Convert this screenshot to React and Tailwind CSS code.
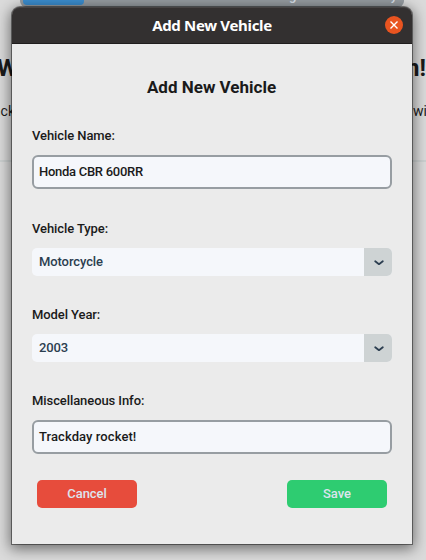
import React from "react";

function Backdrop() {
  return (
    <div className="h-[560px] w-[426px] overflow-hidden bg-[#dbdbdb] text-[#1a1a1a]">
      <div className="ml-5 flex h-[7px] w-[384px] items-end overflow-hidden rounded-b-md bg-[#979da2] pb-[2px] pl-[3px]">
        <div className="h-full w-[61px] rounded-b-sm bg-[#3b8ed0]" />
        <div className="ml-[205px] h-[5px] w-[108px] overflow-hidden">
          <div className="-mt-[12px] flex justify-between text-[13px] leading-4 font-medium text-[#dce4ee]">
            <span>g</span>
            <span>y</span>
          </div>
        </div>
      </div>
      <div className="mt-[45px] -ml-[3px] flex w-[429px] justify-between text-[24px] leading-8 font-bold whitespace-nowrap">
        <span>W</span>
        <span>n!</span>
      </div>
      <div className="mt-[17px] -ml-[7px] flex w-[434px] justify-between text-[14px] leading-5 whitespace-nowrap">
        <span>ack</span>
        <span>wi</span>
      </div>
      <div className="mt-[39px] h-[2px] bg-[#cdd1d1]" />
    </div>
  );
}

function Label({ children }) {
  return <label className="block h-5 text-[13px] leading-5 font-medium tracking-[-0.08px] text-[#1a1a1a]">{children}</label>;
}

function Entry({ children }) {
  return (
    <div className="flex h-[34px] items-center rounded-md border-2 border-[#979da2] bg-[#f5f7fb] pl-[5px] text-[13px] font-medium text-[#1a1a1a]">
      {children}
    </div>
  );
}

function Combo({ value }) {
  return (
    <div className="flex h-7 overflow-hidden rounded-[5px] bg-[#f5f7fb]">
      <span className="flex-1 pl-[7px] text-[13px] leading-[27px] font-medium tracking-[-0.1px] text-[#2c3e50]">{value}</span>
      <span className="flex w-7 items-center justify-center bg-[#ced3d4]">
        <svg width="10" height="6" viewBox="0 0 10 6" className="mt-px ml-px" fill="none" stroke="#2c3e50" strokeWidth="1.8" strokeLinecap="round" strokeLinejoin="round">
          <path d="M1.2 1.3 5 4.2 8.8 1.3" />
        </svg>
      </span>
    </div>
  );
}

export default function App() {
  return (
    <div className="relative h-[560px] w-[426px] overflow-hidden font-['Roboto',sans-serif]">
      <Backdrop />
      <div className="absolute top-[7px] left-[12px] h-[537px] w-[400px] rounded-t-lg bg-[#ebebeb] shadow-[0_0_0_1px_rgba(0,0,0,0.42),0_3px_14px_2px_rgba(0,0,0,0.5)]">
        <div className="flex h-[37px] items-center rounded-t-lg border-b border-[#1f1d1d] bg-[#333030] pr-[9px] pl-[27px] shadow-[inset_0_1px_0_#464343]">
          <span className="flex-1 text-center font-['Noto_Sans',sans-serif] text-[15px] font-bold tracking-[-0.33px] text-white">Add New Vehicle</span>
          <svg width="18" height="18" viewBox="0 0 18 18">
            <circle cx="9" cy="9" r="9" fill="#e95420" />
            <path d="M5.5 5.5 12.5 12.5M12.5 5.5 5.5 12.5" stroke="#fff" strokeWidth="1.4" />
          </svg>
        </div>
        <div className="flex flex-col px-5">
          <h1 className="mt-[31px] h-6 pr-px text-center text-[17px] leading-6 font-bold text-[#1a1a1a]">Add New Vehicle</h1>
          <div className="mt-[27px]"><Label>Vehicle Name:</Label></div>
          <div className="mt-[9px]"><Entry><span className="tracking-[-0.28px]">Honda CBR 600RR</span></Entry></div>
          <div className="mt-[30px]"><Label>Vehicle Type:</Label></div>
          <div className="mt-[9px]"><Combo value="Motorcycle" /></div>
          <div className="mt-[29px]"><Label>Model Year:</Label></div>
          <div className="mt-[9px]"><Combo value="2003" /></div>
          <div className="mt-[29px]"><Label>Miscellaneous Info:</Label></div>
          <div className="mt-[9px]"><Entry><span className="tracking-[0.08px]">Trackday rocket!</span></Entry></div>
          <div className="mt-[26px] flex justify-between px-[5px] text-[13px] leading-[27px] font-medium text-[#dce4ee]">
            <button className="h-7 w-[100px] rounded-[5px] bg-[#e74c3c] pb-px tracking-[-0.08px]">Cancel</button>
            <button className="h-7 w-[100px] rounded-[5px] bg-[#2ecc71] pb-px">Save</button>
          </div>
        </div>
      </div>
    </div>
  );
}
